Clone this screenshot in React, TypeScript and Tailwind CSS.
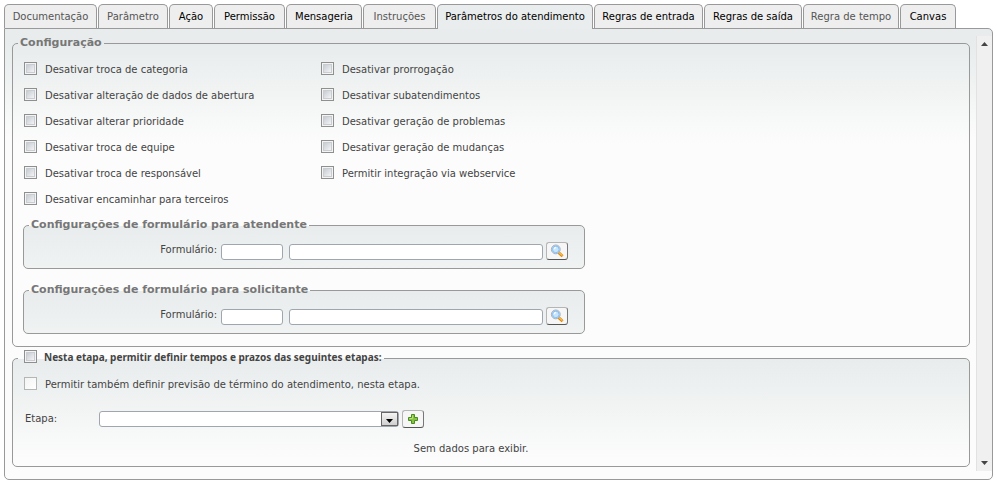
import { useState } from 'react'
import clsx from 'clsx'

interface Tab {
  label: string
  width: string
  muted?: boolean
}

const tabs: Tab[] = [
  { label: 'Documentação', width: 'w-[93px]', muted: true },
  { label: 'Parâmetro', width: 'w-[70px]', muted: true },
  { label: 'Ação', width: 'w-[44px]' },
  { label: 'Permissão', width: 'w-[71px]' },
  { label: 'Mensageria', width: 'w-[76px]' },
  { label: 'Instruções', width: 'w-[73px]', muted: true },
  { label: 'Parâmetros do atendimento', width: 'w-[156px]' },
  { label: 'Regras de entrada', width: 'w-[109px]' },
  { label: 'Regras de saída', width: 'w-[98px]' },
  { label: 'Regra de tempo', width: 'w-[96px]', muted: true },
  { label: 'Canvas', width: 'w-[56px]' },
]

const leftOptions = [
  'Desativar troca de categoria',
  'Desativar alteração de dados de abertura',
  'Desativar alterar prioridade',
  'Desativar troca de equipe',
  'Desativar troca de responsável',
  'Desativar encaminhar para terceiros',
]

const rightOptions = [
  'Desativar prorrogação',
  'Desativar subatendimentos',
  'Desativar geração de problemas',
  'Desativar geração de mudanças',
  'Permitir integração via webservice',
]

const checkboxClass =
  'size-[13px] shrink-0 appearance-none border border-[#8e8f8f] bg-linear-to-br from-[#bcc2c9] to-[#ffffff] shadow-[inset_0_0_0_1px_#f4f4f4,inset_0_0_0_2px_#c9cdd2] checked:from-[#6f8fa8] disabled:border-[#b5b5b5] disabled:from-[#f3f3f3] disabled:shadow-none'

const fieldsetClass =
  'min-w-0 rounded-[5px] border border-[#999] bg-[linear-gradient(#e8ecec,#fcfcfc)] bg-[length:100%_100px] bg-no-repeat'

const inputClass = 'h-4 rounded-[3px] border border-[#a0a6ad] bg-white px-1 outline-none'

const iconButtonClass =
  'flex items-center justify-center rounded-[3px] border border-t-[#b5b5b5] border-l-[#b5b5b5] border-r-[#777] border-b-[#555] bg-[#f6f6f6]'

function SearchIcon() {
  return (
    <svg width="14" height="14" viewBox="0 0 14 14" aria-hidden="true">
      <path d="M8.4 8.4 12.6 12.2" stroke="#d98a12" strokeWidth="2.8" />
      <path d="M8.8 8.4 12.4 11.6" stroke="#ffc04a" strokeWidth="1.2" />
      <circle cx="5.8" cy="5.4" r="4.4" fill="#c6e5ff" stroke="#a9afb6" strokeWidth="1" />
      <circle cx="5.8" cy="5.4" r="3.3" fill="none" stroke="#86bff5" strokeWidth="1" />
      <path d="M4.2 5.2a1.8 1.8 0 0 1 1.9-1.6" stroke="#fff" strokeWidth="1.2" fill="none" />
    </svg>
  )
}

function PlusIcon() {
  return (
    <svg width="12" height="12" viewBox="0 0 12 12" aria-hidden="true">
      <path d="M4.5 1.5h3v3h3v3h-3v3h-3v-3h-3v-3h3z" fill="#86c440" stroke="#4b8a1c" />
      <path d="M5.5 2.5v3h-3" stroke="#b9e07f" fill="none" />
    </svg>
  )
}

function Option({ label, disabled }: { label: string; disabled?: boolean }) {
  return (
    <label className="flex h-[26px] items-start gap-2 pt-1.5 leading-4">
      <input type="checkbox" disabled={disabled} className={checkboxClass} />
      {label}
    </label>
  )
}

function FormPicker({ id, title }: { id: string; title: string }) {
  return (
    <fieldset className={clsx(fieldsetClass, 'w-[562px] max-w-full pb-2')}>
      <legend className="ml-[5px] px-0.5 text-[11px] leading-[14px] font-bold text-[#777]">{title}</legend>
      <div className="mt-2.5 flex items-end">
        <label htmlFor={id} className="w-[193px] pb-1 text-right">
          Formulário:
        </label>
        <input id={id} className={clsx(inputClass, 'ml-1 w-[62px]')} />
        <input aria-label="Nome do formulário" className={clsx(inputClass, 'ml-1.5 w-[254px]')} />
        <button type="button" aria-label="Pesquisar" className={clsx(iconButtonClass, 'ml-[3px] h-[18px] w-[22px]')}>
          <SearchIcon />
        </button>
      </div>
    </fieldset>
  )
}

export default function App() {
  const [active, setActive] = useState('Parâmetros do atendimento')

  return (
    <div className="bg-white px-1 pt-1 pb-[3px] font-['DejaVu_Sans',Verdana,sans-serif] text-[10px] leading-3 text-[#444]">
      {/* Tabs */}
      <div role="tablist" className="flex gap-px">
        {tabs.map((tab) => (
          <button
            key={tab.label}
            type="button"
            role="tab"
            aria-selected={tab.label === active}
            onClick={() => setActive(tab.label)}
            className={clsx(
              'shrink-0 rounded-t-[5px] border border-b-0 border-[#999] whitespace-nowrap',
              tab.width,
              tab.label === active ? 'z-10 -mb-px h-[25px] bg-[#e9eded] pb-px' : 'h-6 bg-[#eee]',
              tab.muted ? 'text-[#555]' : 'text-black',
            )}
          >
            {tab.label}
          </button>
        ))}
      </div>

      {/* Panel */}
      <div className="flex gap-1.5 rounded-[5px] rounded-tl-none border border-[#999] bg-[#fcfcfc] bg-[linear-gradient(#e8ecec_15px,#fcfcfc)] bg-[length:100%_110px] bg-no-repeat pt-[7px] pb-2 pl-[7px]">
        <div className="min-w-0 flex-1 pb-1">
          <fieldset className={clsx(fieldsetClass, 'pb-3')}>
            <legend className="ml-[5px] px-0.5 text-[11px] leading-[14px] font-bold text-[#777]">Configuração</legend>
            <div className="mt-1.5 flex pl-[11px]">
              <div className="w-[297px]">
                {leftOptions.map((label) => (
                  <Option key={label} label={label} />
                ))}
              </div>
              <div>
                {rightOptions.map((label) => (
                  <Option key={label} label={label} />
                ))}
              </div>
            </div>
            <div className="mt-1.5 flex flex-col gap-3.5 pl-2.5">
              <FormPicker id="form-atendente" title="Configurações de formulário para atendente" />
              <FormPicker id="form-solicitante" title="Configurações de formulário para solicitante" />
            </div>
          </fieldset>

          <fieldset className={clsx(fieldsetClass, 'mt-[3px] pb-[11px]')}>
            <legend className="ml-[5px] h-4 pr-0.5 pl-1.5 font-bold">
              <label className="flex items-start gap-[7px] font-['Noto_Sans','DejaVu_Sans',sans-serif] leading-[14px]">
                <input type="checkbox" className={checkboxClass} />
                Nesta etapa, permitir definir tempos e prazos das seguintes etapas:
              </label>
            </legend>
            <div className="mt-[5px] pl-[11px]">
              <Option label="Permitir também definir previsão de término do atendimento, nesta etapa." disabled />
            </div>
            <div className="mt-3 flex h-5 items-center pl-3">
              <label htmlFor="etapa" className="w-[74px]">
                Etapa:
              </label>
              <div className="relative flex">
                <select
                  id="etapa"
                  className="h-4 w-[300px] appearance-none rounded-[3px] border border-[#a0a6ad] bg-white pl-1 outline-none"
                >
                  <option value=""></option>
                </select>
                <span className="pointer-events-none absolute top-px right-px flex h-3.5 w-[17px] items-center justify-center border border-[#666] bg-linear-to-b from-[#f4f4f4] to-[#d0d0d0]">
                  <svg width="7" height="4" viewBox="0 0 7 4" className="mt-1">
                    <path d="M0 0h7L3.5 4z" fill="#000" />
                  </svg>
                </span>
              </div>
              <button
                type="button"
                aria-label="Adicionar etapa"
                className={clsx(iconButtonClass, 'ml-[3px] h-[18px] w-[22px]')}
              >
                <PlusIcon />
              </button>
            </div>
            <p className="mt-3.5 pr-10 text-center">Sem dados para exibir.</p>
          </fieldset>
        </div>

        {/* Scrollbar */}
        <div className="flex w-4 flex-col items-center justify-between border-l border-[#e2e2e2] bg-[#f0f0f0] py-1.5">
          <svg width="7" height="4" viewBox="0 0 7 4">
            <path d="M0 4h7L3.5 0z" fill="#444" />
          </svg>
          <svg width="7" height="4" viewBox="0 0 7 4">
            <path d="M0 0h7L3.5 4z" fill="#444" />
          </svg>
        </div>
      </div>
    </div>
  )
}
